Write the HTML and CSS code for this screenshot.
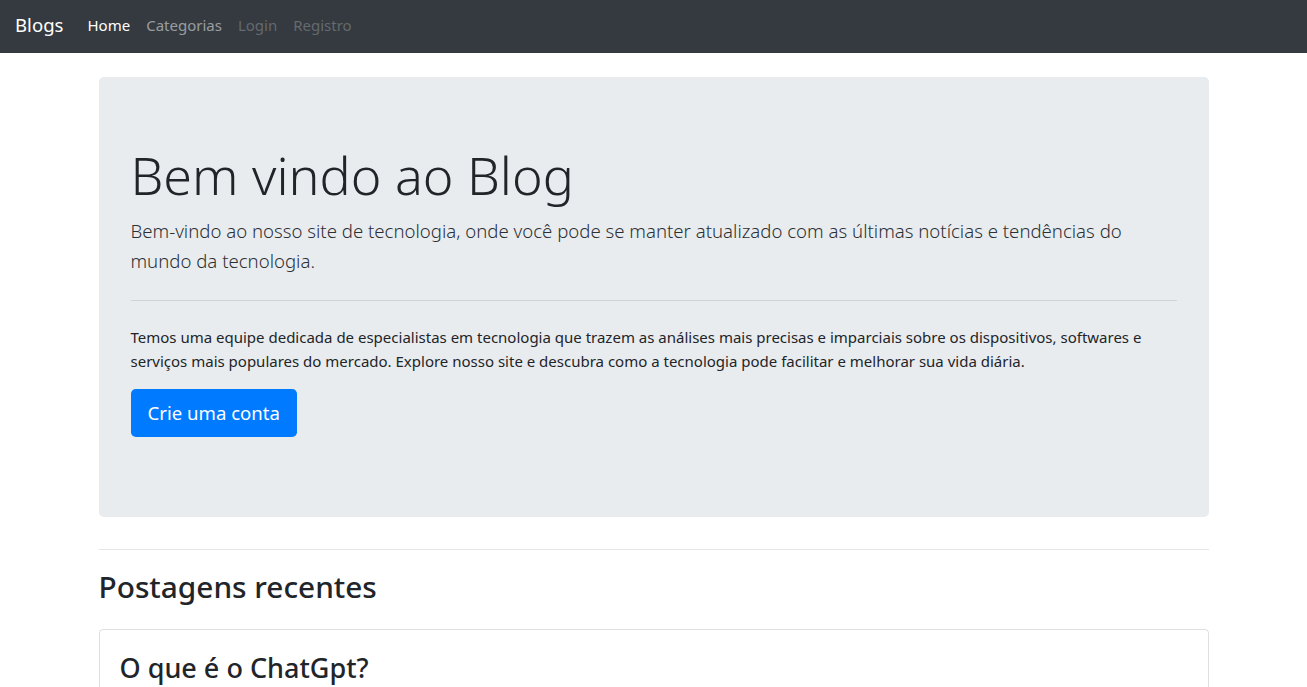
FILE: index.html
```html
<!DOCTYPE html>
<html lang="pt-br">
<head>
<meta charset="utf-8">
<title>Blogs</title>
<link rel="stylesheet" href="styles.css">
</head>
<body>
<nav class="navbar">
  <a class="brand" href="#">Blogs</a>
  <ul class="nav">
    <li><a class="nav-link active" href="#">Home</a></li>
    <li><a class="nav-link" href="#">Categorias</a></li>
    <li><a class="nav-link disabled" href="#">Login</a></li>
    <li><a class="nav-link disabled" href="#">Registro</a></li>
  </ul>
</nav>
<main class="container">
  <section class="jumbotron">
    <h1 class="display">Bem vindo ao Blog</h1>
    <p class="lead">Bem-vindo ao nosso site de tecnologia, onde você pode se manter atualizado com as últimas notícias e tendências do mundo da tecnologia.</p>
    <hr class="divider">
    <p class="text">Temos uma equipe dedicada de especialistas em tecnologia que trazem as análises mais precisas e imparciais sobre os dispositivos, softwares e serviços mais populares do mercado. Explore nosso site e descubra como a tecnologia pode facilitar e melhorar sua vida diária.</p>
    <p class="actions"><a class="btn" href="#">Crie uma conta</a></p>
  </section>
  <hr class="sep">
  <h2 class="section-title">Postagens recentes</h2>
  <article class="card">
    <h3 class="card-title">O que é o ChatGpt?</h3>
  </article>
</main>
</body>
</html>
```
FILE: styles.css
```css
* { box-sizing: border-box; }
html, body { margin: 0; padding: 0; }
body {
  font-family: "Noto Sans", "Open Sans", sans-serif;
  font-size: 16px;
  line-height: 1.5;
  color: #212529;
  background: #fff;
  overflow: hidden;
  height: 687px;
}
a { text-decoration: none; }
.navbar {
  background: #343a40;
  height: 53px;
  display: flex;
  align-items: center;
  padding: 0 15px 4px;
}
.brand {
  color: #fff;
  font-size: 18.6px;
  margin-right: 16px;
  line-height: 30px;
}
.nav { list-style: none; margin: 0; padding: 0; display: flex; }
.nav-link {
  display: block;
  padding: 8px;
  color: rgba(255,255,255,.5);
  font-size: 15px;
  line-height: 24px;
}
.nav-link.active { color: #fff; }
.nav-link.disabled { color: rgba(255,255,255,.25); }
.container {
  width: 1140px;
  margin: 0 auto;
  padding: 0 15px;
}
.jumbotron {
  margin-top: 24px;
  background: #e9ecef;
  border-radius: 4.8px;
  padding: 64px 32px;
  margin-bottom: 32px;
}
.display {
  font-size: 52px;
  font-weight: 300;
  line-height: 67px;
  margin: 0 0 8px;
}
.lead {
  font-size: 18.6px;
  font-weight: 300;
  line-height: 30px;
  margin: 0 0 16px;
  color: #2b3035;
}
.divider {
  border: 0;
  border-top: 1px solid rgba(0,0,0,.1);
  margin: 24px 0;
}
.text { margin: 0 0 16px; font-size: 15px; line-height: 24px; }
.actions { margin: 0 0 16px; line-height: 48px; }
.btn {
  display: inline-block;
  vertical-align: top;
  background: #007bff;
  color: #fff;
  font-size: 18.6px;
  line-height: 32px;
  padding: 8px 17px;
  border-radius: 4.8px;
}
.sep {
  border: 0;
  border-top: 1px solid rgba(0,0,0,.1);
  margin: 0 0 18px;
}
.section-title {
  font-size: 29.8px;
  font-weight: 500;
  line-height: 38px;
  margin: 0 0 23px;
}
.card {
  border: 1px solid rgba(0,0,0,.125);
  border-radius: 4px;
  padding: 21px 20px 20px;
}
.card-title {
  font-size: 27px;
  font-weight: 500;
  line-height: 34px;
  margin: 0 0 12px;
}
```
